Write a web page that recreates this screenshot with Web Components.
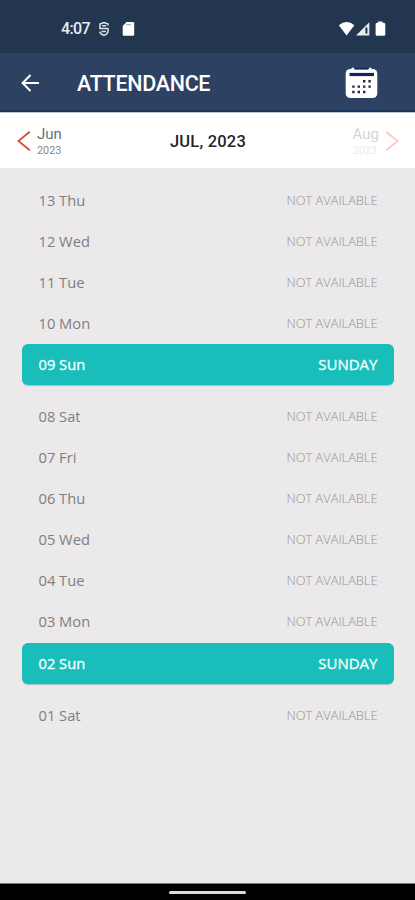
<!DOCTYPE html>
<html lang="en">
<head>
<meta charset="utf-8">
<title>Attendance</title>
<style>
html,body{margin:0;height:100%}
body{background:#000;overflow:hidden}
</style>
</head>
<body>
<attendance-screen></attendance-screen>
<script>
const define = (name, html, setup) => customElements.define(name, class extends HTMLElement {
  connectedCallback() {
    if (this.shadowRoot) return;
    const t = document.createElement('template');
    t.innerHTML = html;
    this.attachShadow({ mode: 'open' }).append(t.content.cloneNode(true));
    if (setup) setup(this);
  }
});

define('status-bar', `
<style>
:host{display:flex;align-items:center;height:53px;box-sizing:border-box;padding:4px 27px 0 61px;background:#23364f;color:#e8ecf0;font:500 16px/20px Roboto,sans-serif}
.time{width:37px;letter-spacing:-.65px}
svg{display:block;flex:none}
.grow{flex:1}
</style>
<span class="time">4:07</span>
<svg width="12" height="16" viewBox="0 0 12 16" fill="none" stroke="#dfe5eb" stroke-width="1.500"><path d="M10 4.600V3L6 1.500 2 3v4.600h8v2.600c0 1.800-1.600 3.300-4 4.200-2.400-.9-4-2.200-4.300-3.700M4.200 4.800h4M3.500 10.500h4.500"/></svg>
<svg width="13" height="16" viewBox="0 0 13 16" style="margin-left:12px"><path d="M4.500 1H11q1.200 0 1.200 1.200V13.500q0 1.200-1.200 1.200H1.900Q.7 14.700.7 13.500V5Z" fill="#fff"/><path d="M4.200 3.700H9" stroke="#9aa5b2" stroke-width="1"/></svg>
<span class="grow"></span>
<svg width="50" height="16" viewBox="0 0 50 16"><path d="M.8 4.200Q8.600-2.200 16.400 4.200L8.600 14.600Z" fill="#fff"/><path d="M18 14.400 31.300 1.200V14.400Z" fill="#e9edf0"/><path d="M28.400 6.500v6" stroke="#23303f" stroke-width="2"/><path d="M40 1.700V.4h4.500v1.300h1.300q1.500 0 1.500 1.500v10q0 1.500-1.500 1.500h-6.700q-1.500 0-1.500-1.500v-10q0-1.500 1.500-1.500Z" fill="#fff"/></svg>
`);

define('app-bar', `
<style>
:host{display:flex;align-items:center;height:59px;box-sizing:border-box;padding:0 37px 0 21px;background:#2d4163;border-bottom:2px solid #14345a;color:#fff;box-shadow:0 1px 0 #bcc7d4;position:relative}
h1{margin:4px 0 0 38px;flex:1;font:500 21.500px/26px Roboto,sans-serif;letter-spacing:-.3px;white-space:nowrap}
svg{display:block;margin-top:2px}
</style>
<svg width="18" height="18" viewBox="0 0 18 18" fill="none" stroke="#fff" stroke-width="2"><path d="M18 9H2M9.500 1 1.600 9l7.900 8"/></svg>
<h1><slot></slot></h1>
<svg width="33" height="33" viewBox="0 0 33 33"><rect x=".7" y="3" width="31.600" height="29" rx="4.500" fill="#fff"/><path d="M9.500 2.700h14" stroke="#17245a" stroke-width="1.800"/><path d="M7.800 3v2M25.200 3v2" stroke="#fff" stroke-width="3" stroke-linecap="round"/><path d="M4.500 8.500h24.500" stroke="#17245a" stroke-width="3.200"/><g stroke="#202a45" stroke-width="2.400" stroke-dasharray="2.400 3"><path d="M18 15.200h9M7.200 20.600h20M7.200 26h14"/></g></svg>
`);

define('month-link', `
<style>
:host{display:flex;align-items:center;color:#6c7074;font-family:Roboto,sans-serif}
:host([disabled]){color:#d4d6d7}
:host([next]){flex-direction:row-reverse}
svg{display:block;margin:-2px 6px 0 0;stroke:#dc4938}
:host([next]) svg{transform:scaleX(-1);margin:-2px 0 0 6px}
:host([disabled]) svg{stroke:#fbc9c6}
b,small{display:block;font-weight:400}
b{font-size:15px;line-height:18px}
small{font-size:10.800px;line-height:15px;color:#85898c}
:host([disabled]) small{color:#e9ebed}
</style>
<svg width="14" height="20" viewBox="0 0 14 20" fill="none" stroke-width="1.800"><path d="M12.800.8 1.400 10l11.400 9.200"/></svg>
<div><b><slot></slot></b><small><slot name="year"></slot></small></div>
`);

define('month-switcher', `
<style>
:host{display:grid;grid-template-columns:1fr auto 1fr;align-items:center;height:56px;box-sizing:border-box;padding:3px 16px 0 17px;background:#fff}
strong{font:500 16.500px/20px Roboto,sans-serif;letter-spacing:.2px;color:#222529;white-space:nowrap}
.next{justify-self:end}
</style>
<month-link>Jun<span slot="year">2023</span></month-link>
<strong><slot></slot></strong>
<month-link class="next" next disabled>Aug<span slot="year">2023</span></month-link>
`);

define('day-row', `
<style>
:host{display:flex;justify-content:space-between;align-items:center;height:41.100px;box-sizing:border-box;padding:0 16.500px 2px 16.500px;border-radius:6px;color:#7d8083;font:400 14.700px/20px "Open Sans",sans-serif;white-space:nowrap}
.state{font-weight:300;font-size:12.800px;color:#919395}
:host([holiday]){background:#19bdba;color:#f2fffd;margin-bottom:11px;box-shadow:0 1px 1px #a3c4c3;-webkit-text-stroke:.35px #f2fffd}
:host([holiday]) .state{font-weight:400;font-size:15px;color:inherit}
</style>
<span class="day"><slot></slot></span><span class="state"></span>
`, el => {
  el.shadowRoot.querySelector('.state').textContent = el.hasAttribute('holiday') ? 'SUNDAY' : 'NOT AVAILABLE';
});

define('nav-handle', `
<style>
:host{display:flex;justify-content:center;height:16px;box-sizing:border-box;padding-top:7px;background:#000;box-shadow:0 -1px 0 #777}
i{width:77px;height:3px;border-radius:2px;background:#dcdddc}
</style><i></i>
`);

define('attendance-screen', `
<style>
:host{display:flex;flex-direction:column;width:415px;height:900px;background:#ebe9ea}
main{flex:1;padding:12px 21px 0 22px}
</style>
<status-bar></status-bar>
<app-bar>ATTENDANCE</app-bar>
<month-switcher>JUL, 2023</month-switcher>
<main></main>
<nav-handle></nav-handle>
`, el => {
  const days = ['13 Thu','12 Wed','11 Tue','10 Mon','09 Sun','08 Sat','07 Fri','06 Thu','05 Wed','04 Tue','03 Mon','02 Sun','01 Sat'];
  const main = el.shadowRoot.querySelector('main');
  for (const d of days) {
    const row = document.createElement('day-row');
    row.textContent = d;
    if (d.endsWith('Sun')) row.setAttribute('holiday', '');
    main.append(row);
  }
});
</script>
</body>
</html>
